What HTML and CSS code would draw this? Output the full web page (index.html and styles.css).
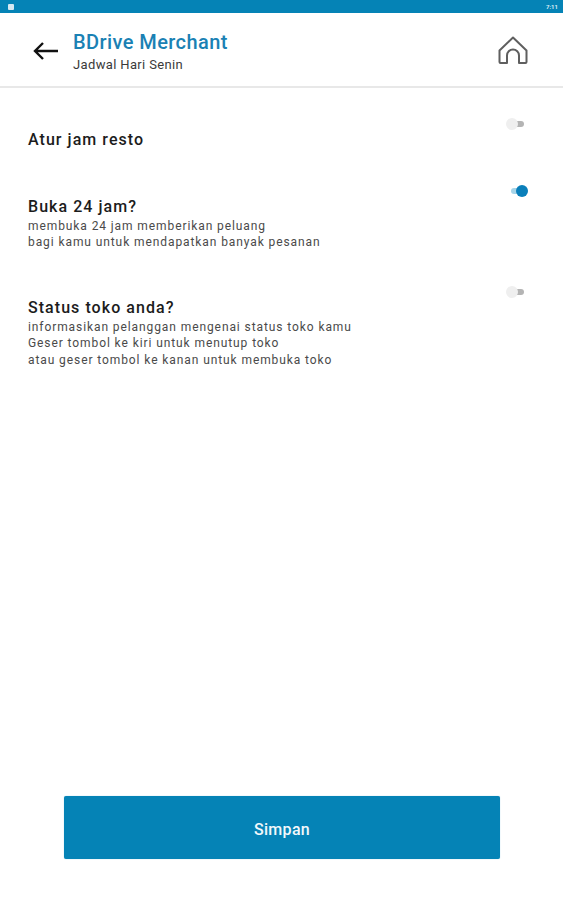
FILE: index.html
```html
<!DOCTYPE html>
<html lang="id">
<head>
<meta charset="utf-8">
<title>BDrive Merchant</title>
<link rel="stylesheet" href="styles.css">
</head>
<body>
<div class="page">
  <div class="statusbar">
    <span class="notif"></span>
    <span class="clock">7:11</span>
  </div>
  <header class="appbar">
    <svg class="back" width="26" height="20" viewBox="0 0 26 20" fill="none" stroke="#111" stroke-width="2.4"><path d="M25 10H2M10 2l-8 8 8 8"/></svg>
    <div class="titles">
      <div class="title">BDrive Merchant</div>
      <div class="subtitle">Jadwal Hari Senin</div>
    </div>
    <svg class="home" width="30" height="28" viewBox="0 0 30 28" fill="none" stroke="#5f5f5f" stroke-width="2" stroke-linejoin="round"><path d="M1.500 14.500 15 1.500l13.500 13v11.500a1 1 0 0 1-1 1H21v-7.500a6 6 0 0 0-12 0V27H2.500a1 1 0 0 1-1-1z"/></svg>
  </header>
  <main class="content">
    <section class="row row-one">
      <div class="text"><h2>Atur jam resto</h2></div>
      <span class="switch off"></span>
    </section>
    <section class="row row-two">
      <div class="text">
        <h2>Buka 24 jam?</h2>
        <p>membuka 24 jam memberikan peluang<br>bagi kamu untuk mendapatkan banyak pesanan</p>
      </div>
      <span class="switch on"></span>
    </section>
    <section class="row row-three">
      <div class="text">
        <h2>Status toko anda?</h2>
        <p>informasikan pelanggan mengenai status toko kamu<br>Geser tombol ke kiri untuk menutup toko<br>atau geser tombol ke kanan untuk membuka toko</p>
      </div>
      <span class="switch off"></span>
    </section>
  </main>
  <div class="footer">
    <button class="save">Simpan</button>
  </div>
</div>
</body>
</html>
```

FILE: styles.css
```css
* { box-sizing: border-box; }
html, body { margin: 0; padding: 0; background: #fff; }
.page {
  width: 563px;
  height: 900px;
  display: flex;
  flex-direction: column;
  font-family: Roboto, "Liberation Sans", sans-serif;
  color: #1c1c1c;
  overflow: hidden;
}
.statusbar {
  height: 13px;
  flex: none;
  background: #0583b6;
  display: flex;
  align-items: center;
  justify-content: space-between;
  padding: 0 5px 0 8px;
}
.notif { width: 6px; height: 6px; border-radius: 1px; background: #d5e8f2; }
.clock { font-size: 6px; font-weight: 700; color: #d8ebf4; }
.appbar {
  height: 75px;
  flex: none;
  display: flex;
  align-items: center;
  padding: 0 35px 0 33px;
  border-bottom: 2px solid #e8e8e8;
}
.back { flex: none; margin-top: 2px; }
.titles { margin-left: 14px; flex: 1; margin-top: 3px; }
.title { font-size: 20px; line-height: 26px; font-weight: 500; letter-spacing: 0.42px; color: #1a81b4; }
.subtitle { font-size: 13px; line-height: 18px; letter-spacing: 0.35px; color: #3a3a3a; margin-top: 1px; }
.home { flex: none; margin-top: 1px; }
.content { flex: 1; padding: 0 35px 0 28px; }
.row { display: flex; justify-content: space-between; align-items: flex-start; }
.row-one { padding-top: 30px; }
.row-two { margin-top: 45px; }
.row-three { margin-top: 46px; }
h2 { margin: 0 0 1px; font-size: 16px; line-height: 21px; font-weight: 500; letter-spacing: 1.05px; color: #1c1c1c; }
p { margin: 0; font-size: 12px; line-height: 16.400px; letter-spacing: 0.91px; color: #4a4a4a; }
.row-one h2 { margin-top: 11px; }
.switch { position: relative; display: block; flex: none; width: 18px; height: 12px; }
.switch::before {
  content: "";
  position: absolute;
  top: 3px;
  left: 3px;
  width: 15px;
  height: 6px;
  border-radius: 3px;
}
.switch::after {
  content: "";
  position: absolute;
  top: 0;
  width: 12px;
  height: 12px;
  border-radius: 50%;
}
.switch.off { margin-right: 4px; }
.switch.off::before { background: #b4b4b4; }
.switch.off::after { left: 0; background: #efefef; }
.switch.on::before { background: #a6d4e8; left: 1px; width: 14px; }
.switch.on::after { left: 6px; background: #0a7fba; }
.row-one .switch { margin-top: 0; }
.row-two .switch { margin-top: -11px; }
.row-three .switch { margin-top: -11px; }
.footer { flex: none; padding: 0 63px 41px 64px; }
.save {
  display: block;
  width: 100%;
  height: 63px;
  padding-top: 4px;
  border: none;
  border-radius: 2px;
  background: #0583b6;
  color: #f2f8fb;
  font-family: inherit;
  font-size: 16px;
  letter-spacing: 0.3px;
  font-weight: 500;
  box-shadow: 0 0 1px #7cc0de;
}
```
